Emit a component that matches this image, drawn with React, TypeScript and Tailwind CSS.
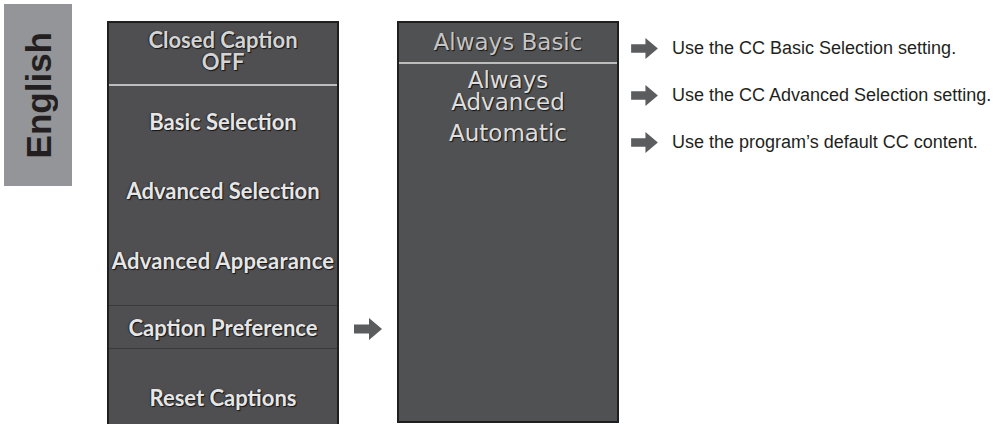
import React from 'react';

const Arrow = ({ className = '' }: { className?: string }) => (
  <svg viewBox="0 0 28 22" className={className}>
    <path d="M0 6.5h15V0l13 11-13 11v-6.5H0z" fill="#5b5c5e" />
  </svg>
);

const menuText = "font-['Lato','Open_Sans',sans-serif] font-bold text-[22px] text-[#e6e6e6] [text-shadow:1px_1px_1px_#151515,-1px_0_1px_#2a2a2a]";
const subText = "font-['DejaVu_Sans',sans-serif] text-[23px] [text-shadow:1px_1px_1px_#151515]";

const descriptions = [
  'Use the CC Basic Selection setting.',
  'Use the CC Advanced Selection setting.',
  'Use the program\u2019s default CC content.',
];

export default function App() {
  return (
    <div className="flex w-[1005px] h-[424px] overflow-hidden bg-white">
      <div className="ml-[4px] mt-[4px] w-[68px] h-[182px] bg-[#939598] flex items-center justify-center shrink-0">
        <span className="[writing-mode:vertical-rl] rotate-180 font-['Liberation_Sans',Arial,sans-serif] font-bold text-[35px] leading-none text-[#231f20]">
          English
        </span>
      </div>

      {/* main menu */}
      <div className={`ml-[35px] mt-[21px] w-[232px] h-[440px] shrink-0 border-2 border-[#1f1f1f] bg-[#4f4f51] flex flex-col ${menuText}`}>
        <div className="h-[61px] pt-[6px] flex flex-col items-center leading-[22px] text-[#d4d4d4]">
          <span>Closed Caption</span>
          <span>OFF</span>
        </div>
        <div className="h-[2px] bg-[#bdbdbd]" />
        <div className="h-[70px] flex items-center justify-center">Basic Selection</div>
        <div className="h-[69px] flex items-center justify-center">Advanced Selection</div>
        <div className="h-[80px] pb-[10px] flex items-center justify-center tracking-[0.2px] whitespace-nowrap">Advanced Appearance</div>
        <div className="h-[44px] border-y border-[#3a3a3c] flex items-center justify-center">Caption Preference</div>
        <div className="h-[96px] flex items-center justify-center">Reset Captions</div>
      </div>

      <div className="w-[58px] shrink-0 flex flex-col">
        <Arrow className="ml-[15px] mt-[318px] w-[28px] h-[22px]" />
      </div>

      {/* sub menu */}
      <div className="mt-[21px] w-[222px] h-[402px] shrink-0 border-2 border-[#1f1f1f] bg-[#505153] flex flex-col items-center">
        <div className={`h-[39px] w-full flex items-center justify-center text-[#c4c4c4] ${subText}`}>Always Basic</div>
        <div className="h-[2px] w-full bg-[#bdbdbd]" />
        <div className={`pt-[5px] flex flex-col items-center leading-[22px] text-[#dedede] ${subText}`}>
          <span>Always</span>
          <span>Advanced</span>
          <span className="mt-[9px]">Automatic</span>
        </div>
      </div>

      {/* descriptions */}
      <div className="ml-[12px] mt-[36px] flex flex-col gap-[23px]">
        {descriptions.map(d => (
          <div key={d} className="flex items-center h-[24px]">
            <Arrow className="w-[27px] h-[21px] shrink-0" />
            <span className="ml-[14px] whitespace-nowrap font-['Liberation_Sans',Arial,sans-serif] text-[18px] text-[#231f20]">{d}</span>
          </div>
        ))}
      </div>
    </div>
  );
}
